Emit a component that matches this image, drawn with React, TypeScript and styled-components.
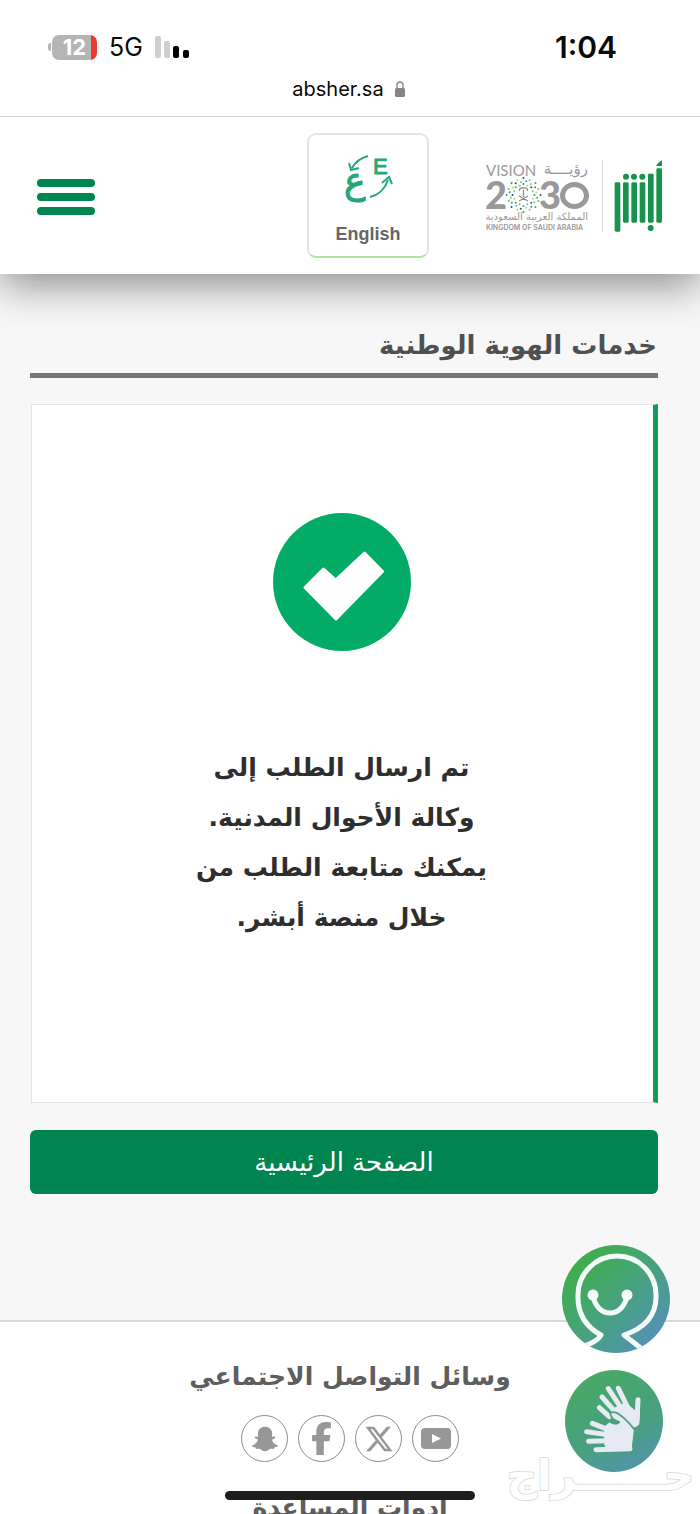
import React from 'react';
import styled, { createGlobalStyle } from 'styled-components';
import { FaSnapchatGhost } from 'react-icons/fa';
import { FaFacebookF, FaXTwitter } from 'react-icons/fa6';

const GlobalStyle = createGlobalStyle`
  * { box-sizing: border-box; }
  body { margin: 0; background: #fff; }
  h1, h2, p, ul { margin: 0; padding: 0; }
  button { font: inherit; border: 0; cursor: pointer; }
`;

const arabic = `'DejaVu Sans', sans-serif`;
const latin = `Inter, 'Liberation Sans', sans-serif`;

const Screen = styled.div`
  position: relative;
  display: flex;
  flex-direction: column;
  height: 100vh;
  overflow: hidden;
  background: #f7f7f7;
  font-family: ${arabic};
`;

const BrowserBar = styled.div`
  position: relative;
  z-index: 1;
  flex: none;
  background: #fff;
  border-bottom: 1px solid #d2d2d2;
  font-family: ${latin};
  color: #0a0a0a;
`;

const StatusRow = styled.div`
  display: flex;
  align-items: center;
  justify-content: space-between;
  padding: 28px 83px 0 48px;
  height: 66px;
`;

const StatusIcons = styled.div`
  display: flex;
  align-items: center;
  gap: 12px;
  font-size: 25px;
  line-height: 38px;
`;

const Battery = styled.span`
  display: flex;
  align-items: center;
  gap: 1px;
`;

const BatteryTip = styled.span`
  width: 3px;
  height: 8px;
  border-radius: 3px 0 0 3px;
  background: #b5b5b5;
`;

const BatteryBody = styled.span`
  width: 45px;
  height: 25px;
  border-radius: 7px;
  background: linear-gradient(to left, #eb3a2c 6px, #b5b5b5 6px);
  color: #fff;
  font-size: 22px;
  font-weight: 700;
  line-height: 25px;
  text-align: center;
`;

const Clock = styled.span`
  font-size: 30px;
  font-weight: 600;
  line-height: 38px;
`;

const AddressRow = styled.div`
  display: flex;
  align-items: center;
  justify-content: center;
  gap: 10px;
  height: 50px;
  padding: 0 2px 4px 0;
  font-size: 20px;
`;

const Header = styled.header`
  position: relative;
  flex: none;
  display: flex;
  align-items: center;
  gap: 57px;
  padding: 16px 37px;
  background: #fff;
  box-shadow: 0 10px 40px rgba(0, 0, 0, 0.45);
`;

const MenuButton = styled.button`
  display: flex;
  flex-direction: column;
  gap: 6px;
  width: 58px;
  margin-right: auto;
  padding: 2px 0 0;
  background: none;
`;

const MenuBar = styled.span`
  height: 8px;
  border-radius: 4px;
  background: #008550;
`;

const LanguageButton = styled.button`
  display: flex;
  flex-direction: column;
  align-items: center;
  justify-content: space-between;
  width: 122px;
  height: 125px;
  padding: 18px 0 11px;
  border: 2px solid #e4e4e4;
  border-bottom-color: #b4e3a0;
  border-radius: 9px;
  background: #fff;
  color: #666;
  font-family: 'Liberation Sans', sans-serif;
  font-size: 18px;
  font-weight: 700;
  line-height: 22px;
`;

const Logos = styled.div`
  display: flex;
  align-items: center;
  gap: 11px;
`;

const Divider = styled.span`
  width: 1px;
  height: 72px;
  margin-left: 2px;
  background: #dcdcdc;
`;

const Main = styled.main`
  flex: none;
  display: flex;
  flex-direction: column;
  padding: 51px 42px 126px 30px;
`;

const PageTitle = styled.h1`
  padding: 0 1px 8px 0;
  border-bottom: 5px solid #777;
  color: #505050;
  font-size: 26px;
  font-weight: 700;
  line-height: 40px;
`;

const Card = styled.section`
  display: flex;
  flex-direction: column;
  align-items: center;
  gap: 92px;
  margin: 26px 0 27px 1px;
  padding: 108px 22px 159px 20px;
  border: 1px solid #e4e4e4;
  border-right: 5px solid #149b5c;
  background: #fff;
`;

const Message = styled.p`
  max-width: 340px;
  color: #2e2e2e;
  font-size: 25px;
  font-weight: 700;
  line-height: 50px;
  text-align: center;
`;

const HomeButton = styled.button`
  height: 64px;
  border-radius: 6px;
  background: #008550;
  color: #fff;
  font-size: 26px;
  line-height: 40px;
`;

const Footer = styled.footer`
  flex: 1 0 auto;
  display: flex;
  flex-direction: column;
  align-items: center;
  padding-top: 35px;
  border-top: 2px solid #dadada;
  background: #fff;
`;

const FooterTitle = styled.h2`
  color: #5e5e5e;
  font-size: 25px;
  font-weight: 700;
  line-height: 40px;
`;

const SocialList = styled.ul`
  display: flex;
  gap: 10px;
  margin: 18px 0 26px;
  list-style: none;
`;

const SocialLink = styled.a`
  display: flex;
  align-items: center;
  justify-content: center;
  width: 47px;
  height: 47px;
  border: 1px solid #8c8c8c;
  border-radius: 50%;
  color: #979797;
`;

const HomeIndicator = styled.div`
  position: absolute;
  bottom: 14px;
  left: 50%;
  width: 250px;
  height: 9px;
  margin-left: -125px;
  border-radius: 5px;
  background: #1e1e1e;
`;

const FloatingTools = styled.div`
  position: absolute;
  right: 30px;
  bottom: 42px;
  display: flex;
  flex-direction: column;
  align-items: center;
  gap: 17px;
`;

const AssistantButton = styled.button`
  width: 108px;
  height: 108px;
  padding: 0;
  overflow: hidden;
  border-radius: 50%;
  background: linear-gradient(135deg, #3fae49 12%, #45a574 45%, #5590b8 90%);
`;

const SignButton = styled.button`
  display: flex;
  width: 98px;
  height: 102px;
  margin-right: 4px;
  padding: 0;
  border-radius: 50%;
  background: linear-gradient(155deg, #48a868 15%, #48a07f 60%, #5590b8 100%);
`;

const Watermark = styled.svg`
  position: absolute;
  right: 4px;
  bottom: 0;
`;

const emblemColors = ['#2f9e5b', '#8cc152', '#3a8fc5', '#56c7b9', '#1d5c7a', '#b9d94a'];
const emblemDots = [11, 14, 17].flatMap((radius, ring) =>
  Array.from({ length: 16 }, (_, i) => {
    const angle = ((i + (ring % 2) * 0.5) * Math.PI) / 8;
    const reach = radius + (i % 2 ? -1 : 0);
    return {
      x: 37.5 + Math.cos(angle) * reach,
      y: 36 + Math.sin(angle) * reach,
      color: emblemColors[(i * 5 + ring * 2) % emblemColors.length],
    };
  }),
);

const VisionLogo = () => (
  <svg width="103" height="74" viewBox="0 0 103 74" fill="#999" role="img" aria-label="Vision 2030">
    <g fontFamily="Lato, sans-serif">
      <text x="0" y="17" fontSize="15">VISION</text>
      <text x="-1" y="50" fontSize="38" fontWeight="900">2</text>
      <text x="53" y="50" fontSize="38" fontWeight="900">3</text>
    </g>
    <ellipse cx="88.500" cy="36.500" rx="12" ry="11" fill="none" stroke="#999" strokeWidth="5" />
    <text x="102" y="15" fontSize="15" direction="rtl" fontFamily="DejaVu Sans">رؤيــــة</text>
    {emblemDots.map((dot, i) => (
      <circle key={i} cx={dot.x} cy={dot.y} r="1" fill={dot.color} />
    ))}
    <path d="M37.500 38V31M33.500 32q0-4 4-3q4-1 4 3M33 42l9-5M42 42l-9-5" fill="none" stroke="#888" strokeWidth="1.300" />
    <text x="102" y="61" fontSize="10" direction="rtl" fontFamily="DejaVu Sans">المملكة العربية السعودية</text>
    <text x="0" y="71" fontSize="7" fontWeight="600" fontFamily="Inter, sans-serif">KINGDOM OF SAUDI ARABIA</text>
  </svg>
);

const AbsherLogo = () => (
  <svg width="49" height="72" viewBox="431 118 147 216" fill="#16934c" role="img" aria-label="أبشر">
    <rect x="433" y="185" width="17" height="148" rx="4" />
    <rect x="458" y="185" width="17" height="121" rx="4" />
    <rect x="483" y="185" width="17" height="121" rx="4" />
    <rect x="508" y="185" width="17" height="121" rx="4" />
    <rect x="533" y="159" width="17" height="147" rx="4" />
    <rect x="558" y="143" width="17" height="163" rx="4" />
    <circle cx="467" cy="168" r="9" />
    <circle cx="491" cy="168" r="9" />
    <circle cx="516" cy="168" r="9" />
    <circle cx="541" cy="322" r="9" />
    <path d="M558 136q1-8 17-17v17z" />
  </svg>
);

const LanguageIcon = () => (
  <svg width="50" height="54" viewBox="0 0 50 54" fill="none" stroke="#25a877" strokeWidth="2" aria-hidden="true">
    <path d="M25 3Q14 6 9 15M6 10l2 7 8-2" />
    <path d="M27 44Q40 41 45 27M39 30l7-6 3 7" />
    <g fill="#25a877" strokeWidth="1" fontWeight="400">
      <text x="30" y="21" fontSize="22" fontFamily="Liberation Sans">E</text>
      <text x="1" y="40" fontSize="36" fontFamily="DejaVu Sans">ع</text>
    </g>
  </svg>
);

const SignHands = () => (
  <svg
    width="98"
    height="102"
    viewBox="75 420 294 306"
    fill="#e7eaf4"
    stroke="#e7eaf4"
    strokeLinecap="round"
    strokeLinejoin="round"
    aria-hidden="true"
  >
    <g strokeWidth="15">
      <path d="M205 476L242 532M235 475L262 530M186 501L226 546M178 533L208 560M294 509L291 570" fill="none" />
      <path d="M222 540L256 524L282 546L294 548L292 580L284 586L240 558Z" strokeWidth="12" />
    </g>
    <path
      d="M190 590L207 574Q228 588 238 576Q210 566 211 549Q222 542 236 552Q262 570 284 600L277 660L205 662L190 645Z"
      stroke="#48a37a"
      strokeWidth="5"
    />
    <path d="M157 580L212 602M140 605L204 614M146 634L204 632M168 659L270 656" fill="none" strokeWidth="15" />
    <path d="M200 592L274 602L270 655L200 655Z" strokeWidth="8" />
  </svg>
);

export default function App() {
  return (
    <Screen>
      <GlobalStyle />
      <BrowserBar>
        <StatusRow>
          <StatusIcons>
            <Battery>
              <BatteryTip />
              <BatteryBody>12</BatteryBody>
            </Battery>
            <span>5G</span>
            <svg width="36" height="24" viewBox="0 0 36 24" aria-hidden="true">
              <rect x="0" y="1" width="6" height="22" rx="2" fill="#cfcfcf" />
              <rect x="9" y="6" width="6" height="17" rx="2" fill="#cfcfcf" />
              <rect x="18" y="11" width="6" height="12" rx="2" />
              <rect x="28" y="15" width="6" height="8" rx="2" />
            </svg>
          </StatusIcons>
          <Clock>1:04</Clock>
        </StatusRow>
        <AddressRow>
          <span>absher.sa</span>
          <svg width="12" height="16" viewBox="0 0 12 16" aria-hidden="true">
            <rect x="1" y="7" width="10" height="9" rx="1.500" fill="#858585" />
            <path d="M3 8V4a3 3 0 0 1 6 0v4" fill="none" stroke="#858585" strokeWidth="1.400" />
          </svg>
        </AddressRow>
      </BrowserBar>

      <Header>
        <MenuButton aria-label="القائمة">
          <MenuBar />
          <MenuBar />
          <MenuBar />
        </MenuButton>
        <LanguageButton>
          <LanguageIcon />
          English
        </LanguageButton>
        <Logos>
          <VisionLogo />
          <Divider />
          <AbsherLogo />
        </Logos>
      </Header>

      <Main>
        <PageTitle dir="rtl">خدمات الهوية الوطنية</PageTitle>
        <Card>
          <svg width="138" height="138" viewBox="0 0 138 138" aria-hidden="true">
            <circle cx="69" cy="69" r="69" fill="#02ac66" />
            <path
              d="M32 74.500L50.500 56L62.700 67L91.500 40L109.500 58.500L63 106Z"
              fill="#fff"
              stroke="#fff"
              strokeWidth="3"
              strokeLinejoin="round"
            />
          </svg>
          <Message dir="rtl">
            تم ارسال الطلب إلى
            <br />
            وكالة الأحوال المدنية.
            <br />
            يمكنك متابعة الطلب من
            <br />
            خلال منصة أبشر.
          </Message>
        </Card>
        <HomeButton dir="rtl">الصفحة الرئيسية</HomeButton>
      </Main>

      <Footer dir="rtl">
        <FooterTitle>وسائل التواصل الاجتماعي</FooterTitle>
        <SocialList>
          <li>
            <SocialLink href="#youtube" aria-label="YouTube">
              <svg width="30" height="21" viewBox="0 0 30 21" aria-hidden="true">
                <rect width="30" height="21" rx="4" fill="currentColor" />
                <path d="M11 6l9 4.500-9 4.500z" fill="#fff" />
              </svg>
            </SocialLink>
          </li>
          <li>
            <SocialLink href="#x" aria-label="X">
              <FaXTwitter size={30} />
            </SocialLink>
          </li>
          <li>
            <SocialLink href="#facebook" aria-label="Facebook">
              <FaFacebookF size={33} />
            </SocialLink>
          </li>
          <li>
            <SocialLink href="#snapchat" aria-label="Snapchat">
              <FaSnapchatGhost size={26} />
            </SocialLink>
          </li>
        </SocialList>
        <FooterTitle>أدوات المساعدة</FooterTitle>
      </Footer>

      <Watermark width="200" height="62" viewBox="0 0 200 62" aria-hidden="true">
        <text
          x="198"
          y="38"
          direction="rtl"
          fontFamily="DejaVu Sans"
          fontWeight="700"
          fontSize="42"
          fill="#fff"
          stroke="#dcdfe0"
          strokeWidth="2"
          paintOrder="stroke"
        >
          حــــــراج
        </text>
      </Watermark>

      <FloatingTools>
        <AssistantButton aria-label="المساعد">
          <svg width="108" height="108" viewBox="0 0 108 108" fill="none" stroke="#f4faf8" strokeWidth="5" aria-hidden="true">
            <path d="M22 101Q35 97 39 90Q15 77 16 50A38 38 0 0 1 94 50Q95 79 62 90L80 104" strokeLinejoin="round" />
            <path d="M31 52Q36 68 48 68Q60 68 65 52" />
            <circle cx="31" cy="50" r="5.500" fill="#f4faf8" stroke="none" />
            <circle cx="65" cy="50" r="5.500" fill="#f4faf8" stroke="none" />
          </svg>
        </AssistantButton>
        <SignButton aria-label="لغة الإشارة">
          <SignHands />
        </SignButton>
      </FloatingTools>
      <HomeIndicator />
    </Screen>
  );
}
